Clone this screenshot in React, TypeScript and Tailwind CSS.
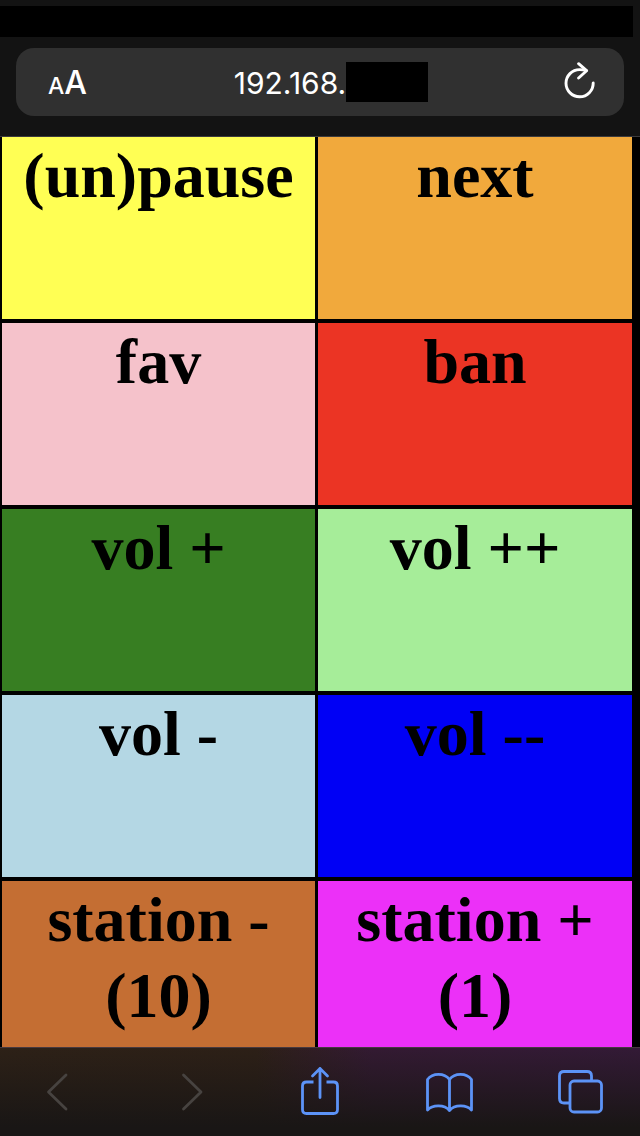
import React from "react";

type Command = { label: string; color: string };

const commands: Command[] = [
  { label: "(un)pause", color: "bg-[#ffff54]" },
  { label: "next", color: "bg-[#f1a93c]" },
  { label: "fav", color: "bg-[#f5c2cb]" },
  { label: "ban", color: "bg-[#eb3424]" },
  { label: "vol +", color: "bg-[#377e22]" },
  { label: "vol ++", color: "bg-[#a6ed99]" },
  { label: "vol -", color: "bg-[#b4d7e4]" },
  { label: "vol --", color: "bg-[#0000f5]" },
  { label: "station - (10)", color: "bg-[#c46e33]" },
  { label: "station + (1)", color: "bg-[#ec30f8]" },
];

function AddressBar() {
  return (
    <header className="shrink-0 border-b border-[#3c3b3d] bg-[#131313] pt-1.5 pb-5">
      <div className="mr-[7px] h-[31px] bg-black" />
      <div className="mx-4 mt-[11px] grid h-[68px] grid-cols-[1fr_auto_1fr] items-center rounded-[18px] bg-[#303030] px-7 font-['Inter',sans-serif] text-white">
        <button
          type="button"
          aria-label="Text size"
          className="flex items-baseline justify-self-start pt-1 pl-1 font-medium"
        >
          <span className="text-[23px] leading-10">A</span>
          <span className="text-[32px] leading-10">A</span>
        </button>
        <div className="flex h-10 items-center pl-[22px]">
          <span className="pt-0.5 text-[30px] leading-10">192.168.</span>
          <span className="h-10 w-[82px] bg-black" />
        </div>
        <button type="button" aria-label="Reload" className="justify-self-end">
          <svg
            width="32"
            height="40"
            viewBox="0 0 32 40"
            fill="none"
            stroke="currentColor"
            strokeWidth="2.9"
            strokeLinecap="round"
            strokeLinejoin="round"
          >
            <path d="M29.200 21A13.600 13.600 0 1 1 15.600 7.600C18 7.600 20 7.900 22 8.400" />
            <path d="M14.600 1.700L22.600 8.700L14.600 16" />
          </svg>
        </button>
      </div>
    </header>
  );
}

function Toolbar() {
  return (
    <nav
      aria-label="Browser"
      className="flex h-[89px] shrink-0 items-start justify-between border-t border-[#46393f] bg-[linear-gradient(to_bottom,transparent,#191615_90%),linear-gradient(to_right,#2d2117_0%,#2d2017_40%,#331a32_58%,#331a36_100%)] px-8 pt-4 text-[#5c93f7]"
    >
      <button type="button" aria-label="Back" className="text-[#474340]">
        <svg width="52" height="56" viewBox="0 0 52 56" fill="none" stroke="currentColor" strokeWidth="2.8" strokeLinecap="round" strokeLinejoin="round">
          <path d="M34 11L16.500 28L34 45" />
        </svg>
      </button>
      <button type="button" aria-label="Forward" className="text-[#474340]">
        <svg width="52" height="56" viewBox="0 0 52 56" fill="none" stroke="currentColor" strokeWidth="2.8" strokeLinecap="round" strokeLinejoin="round">
          <path d="M20.500 11L38 28L20.500 45" />
        </svg>
      </button>
      <button type="button" aria-label="Share">
        <svg width="52" height="56" viewBox="0 0 52 56" fill="none" stroke="currentColor" strokeWidth="2.8" strokeLinecap="butt" strokeLinejoin="round">
          <path d="M19.500 18H12.500Q8.500 18 8.500 22V45.500Q8.500 49.500 12.500 49.500H39.500Q43.500 49.500 43.500 45.500V22Q43.500 18 39.500 18H32.500" />
          <path d="M26 33.500V4.500M18.500 12L26 4.500L33.500 12" strokeLinecap="round" />
        </svg>
      </button>
      <button type="button" aria-label="Bookmarks">
        <svg width="52" height="56" viewBox="0 0 52 56" fill="none" stroke="currentColor" strokeWidth="2.8" strokeLinecap="round" strokeLinejoin="round">
          <path d="M24.500 15.500C19.500 8.700 7.500 8.700 2.500 15.500V46C7.500 40.500 19.500 40.500 24.500 46.500C29.500 40.500 41.500 40.500 46.500 46V15.500C41.500 8.700 29.500 8.700 24.500 15.500V46.500" />
        </svg>
      </button>
      <button type="button" aria-label="Tabs">
        <svg width="52" height="56" viewBox="0 0 52 56" fill="none" stroke="currentColor" strokeWidth="2.8" strokeLinecap="round" strokeLinejoin="round">
          <rect x="14" y="17" width="31.500" height="31" rx="4" />
          <path d="M13.500 39H8Q3.500 39 3.500 34.500V12Q3.500 7.500 8 7.500H31Q35.500 7.500 35.500 12V16.500" />
        </svg>
      </button>
    </nav>
  );
}

export default function App() {
  return (
    <div className="flex h-screen flex-col bg-black">
      <AddressBar />
      <main className="min-h-0 flex-1 overflow-y-auto pr-2 pl-0.5 [scrollbar-width:none]">
        <div className="grid grid-cols-[313fr_314fr] gap-x-[3px] gap-y-1">
          {commands.map(({ label, color }) => (
            <button
              key={label}
              type="button"
              className={`flex h-[182px] items-start justify-center px-4 pt-px text-center font-['Liberation_Serif',serif] text-[64px] leading-[76px] font-bold text-black ${color}`}
            >
              {label}
            </button>
          ))}
        </div>
      </main>
      <Toolbar />
    </div>
  );
}
